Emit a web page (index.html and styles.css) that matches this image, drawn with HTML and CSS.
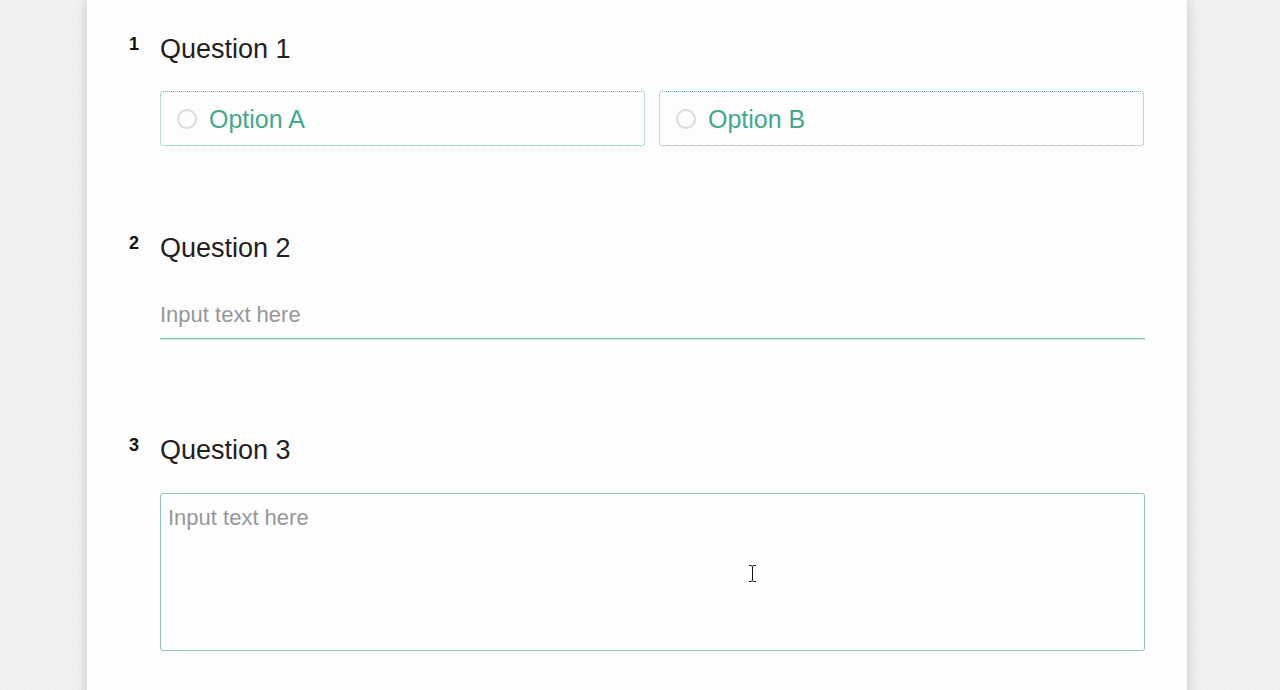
FILE: index.html
```html
<!DOCTYPE html>
<html lang="en">
<head>
<meta charset="utf-8">
<title>Survey</title>
<link rel="stylesheet" href="styles.css">
</head>
<body>
<div class="page">
  <main class="card">
    <section class="question">
      <div class="q-head">
        <span class="q-num">1</span>
        <h2 class="q-title">Question 1</h2>
      </div>
      <div class="q-body options">
        <label class="option"><span class="radio"></span><span class="option-text">Option A</span></label>
        <label class="option"><span class="radio"></span><span class="option-text">Option B</span></label>
      </div>
    </section>
    <section class="question">
      <div class="q-head">
        <span class="q-num">2</span>
        <h2 class="q-title">Question 2</h2>
      </div>
      <div class="q-body">
        <input class="line-input" type="text" placeholder="Input text here">
      </div>
    </section>
    <section class="question">
      <div class="q-head">
        <span class="q-num">3</span>
        <h2 class="q-title">Question 3</h2>
      </div>
      <div class="q-body area-wrap">
        <textarea class="area-input" placeholder="Input text here"></textarea>
        <svg class="ibeam" width="9" height="17" viewBox="0 0 9 17" aria-hidden="true">
          <path d="M1 0.5h2.5M5.5 0.5H8M4.5 1.5v14M1 16.5h2.5M5.5 16.5H8M3.5 1h2M3.5 16h2" stroke="#111" stroke-width="1" fill="none"/>
        </svg>
      </div>
    </section>
  </main>
</div>
</body>
</html>
```

FILE: styles.css
```css
html, body {
  margin: 0;
  padding: 0;
  height: 100%;
  overflow: hidden;
}

body {
  background-color: #eef0f2;
  background-image: repeating-conic-gradient(#eceef0 0 25%, #f2f3f5 0 50%);
  background-size: 3px 3px;
  font-family: "Liberation Sans", Arial, sans-serif;
}

.page {
  display: flex;
  justify-content: center;
  padding-right: 6px;
  min-height: 100%;
}

.card {
  width: 1100px;
  box-sizing: border-box;
  background: #fdfdfd;
  box-shadow: 0 0 12px rgba(0, 0, 0, 0.18);
  padding: 32px 42px 60px 43px;
  display: flex;
  flex-direction: column;
  gap: 85px;
  min-height: 800px;
}

.question {
  display: flex;
  flex-direction: column;
}

.question:nth-child(2) {
  padding-bottom: 9px;
}

.q-head {
  display: flex;
  align-items: flex-start;
}

.q-num {
  width: 30px;
  flex: none;
  font-family: "Liberation Sans", Arial, sans-serif;
  font-size: 18px;
  line-height: 20px;
  font-weight: bold;
  color: #111;
  margin-top: 2px;
  margin-left: -1px;
  margin-right: 1px;
}

.q-title {
  margin: 0;
  padding-top: 1px;
  font-size: 27px;
  line-height: 32px;
  font-weight: normal;
  color: #1f1f1f;
}

.q-body {
  margin-left: 30px;
}

.options {
  margin-top: 26px;
  display: grid;
  grid-template-columns: 485px 485px;
  gap: 14px;
}

.option {
  display: flex;
  align-items: center;
  height: 55px;
  box-sizing: border-box;
  border: 1px dotted #6db7a5;
  border-radius: 3px;
  padding-left: 16px;
  gap: 12px;
  cursor: pointer;
}

.radio {
  width: 20px;
  height: 20px;
  box-sizing: border-box;
  border: 2px solid #d9d9de;
  border-radius: 50%;
  flex: none;
}

.option-text {
  font-size: 25px;
  line-height: 30px;
  color: #43a88d;
}

.line-input {
  display: block;
  width: 100%;
  box-sizing: content-box;
  margin-top: 37px;
  height: 26px;
  padding: 1px 0 10px 0;
  border: none;
  border-bottom: 1px solid #86c4b4;
  box-shadow: 0 1px 0 #c9e5dd;
  background: transparent;
  font-family: "Liberation Sans", Arial, sans-serif;
  font-size: 22px;
  line-height: 26px;
  color: #222;
  outline: none;
}

.line-input::placeholder,
.area-input::placeholder {
  color: #979797;
  opacity: 1;
}

.area-wrap {
  position: relative;
  margin-top: 27px;
}

.area-input {
  display: block;
  width: 100%;
  height: 158px;
  box-sizing: border-box;
  padding: 11px 7px 10px;
  border: 1px solid #8cc5b8;
  border-radius: 3px;
  background: transparent;
  font-family: "Liberation Sans", Arial, sans-serif;
  font-size: 22px;
  line-height: 26px;
  color: #222;
  resize: none;
  outline: none;
}

.ibeam {
  position: absolute;
  left: 588px;
  top: 72px;
}
```
